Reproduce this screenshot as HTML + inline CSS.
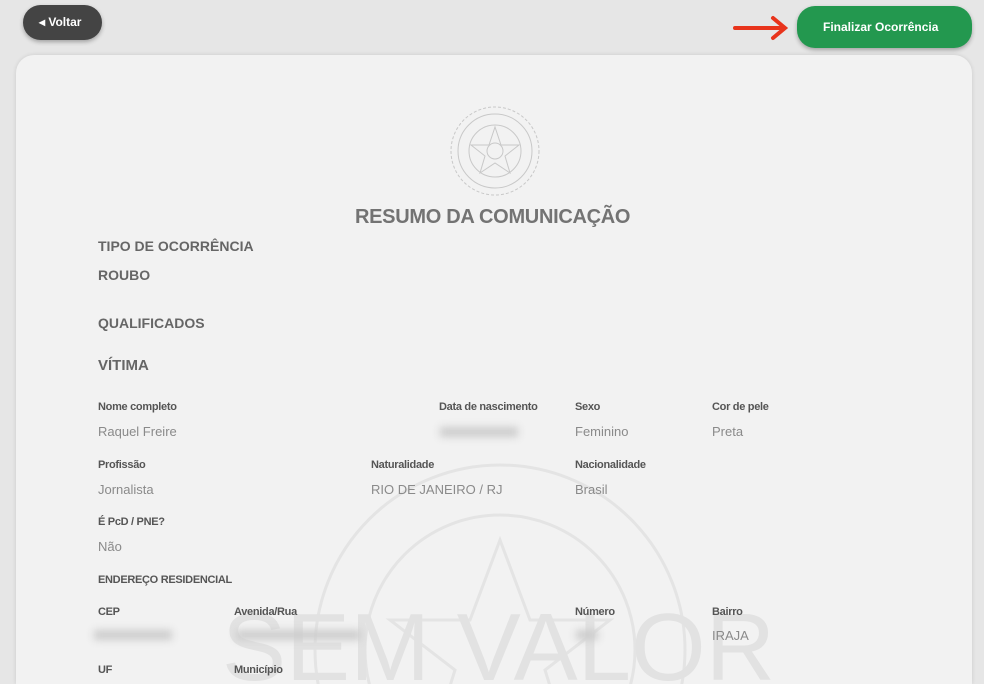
<!DOCTYPE html>
<html style="overflow:hidden;height:684px"><head><meta charset="utf-8"><style>
body{margin:0;width:984px;height:684px;background:#e6e6e6;font-family:"Liberation Sans",Arial,sans-serif;position:relative;overflow:hidden}
.btn{position:absolute;border-radius:18px;color:#fff;font-weight:bold;font-size:12px;box-shadow:0 2px 4px rgba(0,0,0,.3)}
.card{position:absolute;left:16px;top:55px;width:956px;height:629px;background:#f2f2f2;border-radius:18px 18px 0 0;box-shadow:0 0 4px rgba(0,0,0,.12)}
.a{position:absolute;white-space:nowrap}
.h{font-weight:bold;color:#666;font-size:14px}
.l{font-weight:bold;color:#555;font-size:11px;letter-spacing:-.3px}
.v{color:#8a8a8a;font-size:13px}
.blur{position:absolute;background:#ccc;filter:blur(4px);height:10px}
</style></head><body>
<div class="btn" style="left:23px;top:5px;width:79px;height:35px;background:#444"><span class="a" style="left:16px;top:10px">◂ Voltar</span></div>
<svg class="a" style="left:733px;top:14px" width="58" height="28"><path d="M2 14H50M40 4L52 14L40 24" stroke="#e8341c" stroke-width="4" fill="none" stroke-linecap="round"/></svg>
<div class="btn" style="left:797px;top:6px;width:175px;height:42px;background:#23984f"><span class="a" style="left:26px;top:14px">Finalizar Ocorrência</span></div>
<div class="card"></div>
<svg class="a" style="left:280px;top:430px" width="440" height="254"><g fill="none" stroke="#e4e4e4" stroke-width="3"><circle cx="220" cy="220" r="185"/><circle cx="220" cy="220" r="135"/><path d="M220 110L250 190L330 190L265 240L290 320L220 270L150 320L175 240L110 190L190 190Z"/></g></svg>
<div class="a" style="left:222px;top:598px;font-size:96px;line-height:100px;color:#e2e2e2">SEM VALOR</div>
<svg class="a" style="left:447px;top:105px" width="96" height="92"><g fill="none" stroke="#c8c8c8"><circle cx="48" cy="46" r="44" stroke-dasharray="3 2"/><circle cx="48" cy="46" r="37"/><circle cx="48" cy="46" r="26"/><path d="M48 22L54 40L72 40L58 51L63 68L48 58L33 68L38 51L24 40L42 40Z"/><circle cx="48" cy="46" r="8"/></g></svg>
<div class="a" style="left:355px;top:206px;font-size:20px;font-weight:bold;color:#737373;letter-spacing:-.3px">RESUMO DA COMUNICAÇÃO</div>
<div class="a h" style="left:98px;top:238px">TIPO DE OCORRÊNCIA</div>
<div class="a h" style="left:98px;top:267px">ROUBO</div>
<div class="a h" style="left:98px;top:315px">QUALIFICADOS</div>
<div class="a h" style="left:98px;top:357px;font-size:15px">VÍTIMA</div>
<div class="a l" style="left:98px;top:401px">Nome completo</div>
<div class="a l" style="left:439px;top:401px">Data de nascimento</div>
<div class="a l" style="left:575px;top:401px">Sexo</div>
<div class="a l" style="left:712px;top:401px">Cor de pele</div>
<div class="a v" style="left:98px;top:424px">Raquel Freire</div>
<div class="blur" style="left:440px;top:427px;width:78px"></div>
<div class="a v" style="left:575px;top:424px">Feminino</div>
<div class="a v" style="left:712px;top:424px">Preta</div>
<div class="a l" style="left:98px;top:459px">Profissão</div>
<div class="a l" style="left:371px;top:459px">Naturalidade</div>
<div class="a l" style="left:575px;top:459px">Nacionalidade</div>
<div class="a v" style="left:98px;top:482px">Jornalista</div>
<div class="a v" style="left:371px;top:482px">RIO DE JANEIRO / RJ</div>
<div class="a v" style="left:575px;top:482px">Brasil</div>
<div class="a l" style="left:98px;top:516px">É PcD / PNE?</div>
<div class="a v" style="left:98px;top:539px">Não</div>
<div class="a l" style="left:98px;top:574px">ENDEREÇO RESIDENCIAL</div>
<div class="a l" style="left:98px;top:606px">CEP</div>
<div class="a l" style="left:234px;top:606px">Avenida/Rua</div>
<div class="a l" style="left:575px;top:606px">Número</div>
<div class="a l" style="left:712px;top:606px">Bairro</div>
<div class="blur" style="left:94px;top:630px;width:78px"></div>
<div class="blur" style="left:236px;top:630px;width:125px"></div>
<div class="blur" style="left:576px;top:630px;width:22px"></div>
<div class="a v" style="left:712px;top:628px">IRAJA</div>
<div class="a l" style="left:98px;top:664px">UF</div>
<div class="a l" style="left:234px;top:664px">Município</div>
</body></html>
